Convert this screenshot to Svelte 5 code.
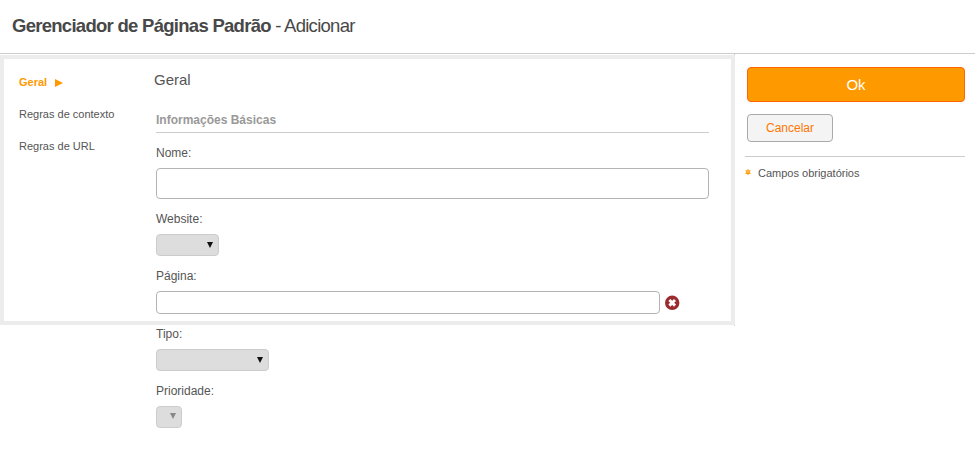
<script>
  const menu = [
    { label: 'Geral', active: true },
    { label: 'Regras de contexto' },
    { label: 'Regras de URL' }
  ];
</script>

<div class="page">
  <header class="head">
    <h1><strong>Gerenciador de Páginas Padrão</strong> - Adicionar</h1>
  </header>
  <div class="body">
    <div class="main">
      <div class="panel">
        <nav class="menu">
          {#each menu as item}
            <a href="#x" class:active={item.active}>{item.label}{#if item.active}<span class="arrow"></span>{/if}</a>
          {/each}
        </nav>
        <div class="content">
          <h2>Geral</h2>
          <form class="form">
            <h3>Informações Básicas</h3>
            <label class="lbl" for="nome">Nome:</label>
            <input id="nome" class="text big" type="text" />
            <label class="lbl" for="web">Website:</label>
            <span class="selwrap"><select id="web" class="sel w63"><option></option></select></span>
            <label class="lbl" for="pag">Página:</label>
            <div class="row">
              <input id="pag" class="text small" type="text" />
              <svg class="x" width="15" height="15" viewBox="0 0 15 15" aria-hidden="true">
                <circle cx="7.2" cy="7.8" r="7.2" fill="#9c2b2e" />
                <path d="M4.4 5l5.6 5.6M10 5l-5.6 5.6" stroke="#fff" stroke-width="2.9" />
              </svg>
            </div>
            <label class="lbl" for="tipo">Tipo:</label>
            <span class="selwrap"><select id="tipo" class="sel w113"><option></option></select></span>
            <label class="lbl" for="pri">Prioridade:</label>
            <span class="selwrap off"><select id="pri" class="sel w26" disabled><option></option></select></span>
          </form>
        </div>
      </div>
    </div>
    <aside class="side">
      <button class="ok" type="button">Ok</button>
      <button class="cancel" type="button">Cancelar</button>
      <div class="req">
        <svg class="star" width="6" height="6" viewBox="0 0 6 6" aria-hidden="true">
          <path d="M3 0.3v5.4M0.6 1.5l4.8 3M5.4 1.5l-4.8 3" stroke="#f90" stroke-width="1.3" />
          <rect x="2.2" y="2.4" width="1.6" height="1.2" fill="#ffd27a" />
        </svg>
        <span>Campos obrigatórios</span>
      </div>
    </aside>
  </div>
</div>

<style>
  :global(body) {
    margin: 0;
    background: #fff;
    font-family: "Liberation Sans", Arial, sans-serif;
    color: #555;
    overflow: hidden;
  }
  .page {
    width: 975px;
    height: 463px;
    overflow: hidden;
  }
  .head {
    height: 52px;
    padding-bottom: 1px;
    border-bottom: 1px solid #ccc;
    box-sizing: content-box;
    display: flex;
    align-items: center;
    padding-left: 12px;
  }
  h1 {
    margin: 0;
    font-size: 18.5px;
    font-weight: 400;
    letter-spacing: -0.72px;
    color: #484848;
  }
  h1 strong { font-weight: 700; }
  .body { display: flex; align-items: flex-start; }
  .main {
    width: 734px;
    height: 271px;
    border-right: 1px solid #ccc;
    flex: none;
    padding-top: 1px;
    box-sizing: content-box;
  }
  .panel {
    width: 727px;
    height: 262px;
    border: 4px solid #ececec;
    background: #fff;
    display: flex;
  }
  .menu {
    width: 150px;
    flex: none;
    display: flex;
    flex-direction: column;
    padding: 17px 0 0 15px;
    box-sizing: border-box;
    gap: 19px;
  }
  .menu a {
    font-size: 11px;
    line-height: 13px;
    color: #555;
    text-decoration: none;
    display: flex;
    align-items: center;
  }
  .menu a.active { color: #f90; font-weight: 700; }
  .arrow {
    width: 0;
    height: 0;
    margin-left: 8px;
    border-left: 8px solid #f90;
    border-top: 4px solid transparent;
    border-bottom: 4px solid transparent;
  }
  .content { flex: 1; min-width: 0; }
  h2 {
    margin: 12px 0 0;
    font-size: 15px;
    line-height: 18px;
    font-weight: 400;
    color: #555;
  }
  .form {
    margin: 0 0 0 2px;
    width: 553px;
    display: flex;
    flex-direction: column;
    align-items: flex-start;
  }
  h3 {
    margin: 16px 0 0;
    padding-top: 3px;
    width: 100%;
    height: 28px;
    line-height: 25px;
    font-size: 12px;
    font-weight: 700;
    color: #999;
    border-bottom: 1px solid #ccc;
    box-sizing: border-box;
  }
  .lbl {
    font-size: 12px;
    line-height: 14px;
    color: #555;
    margin-top: 13px;
    margin-bottom: 8px;
  }
  .text {
    border: 1px solid #b4b4b4;
    border-radius: 4px;
    background: #fff;
    padding: 0 6px;
    box-sizing: border-box;
    display: block;
  }
  .big { width: 553px; height: 31px; }
  .small { width: 504px; height: 23px; }
  .row { display: flex; align-items: center; gap: 5px; }
  .selwrap { position: relative; display: block; }
  .selwrap::after {
    content: "";
    position: absolute;
    top: 8px;
    right: 6px;
    width: 0;
    height: 0;
    border-top: 6px solid #111;
    border-left: 3px solid transparent;
    border-right: 3px solid transparent;
    pointer-events: none;
  }
  .selwrap.off::after { top: 7px; border-top-color: #888; }
  .sel {
    appearance: none;
    height: 22px;
    background-color: #ddd;
    border: 1px solid #ccc;
    border-radius: 4px;
    display: block;
    font-size: 12px;
    color: #000;
    padding: 0;
  }
  .sel:disabled { opacity: 1; color: #777; }
  .w63 { width: 63px; }
  .w113 { width: 113px; }
  .w26 { width: 26px; }
  .side {
    flex: 1;
    padding: 13px 10px 0 12px;
    display: flex;
    flex-direction: column;
    align-items: flex-start;
  }
  button { font-family: inherit; cursor: pointer; }
  .ok {
    width: 218px;
    height: 35px;
    background: #f90;
    border: 1px solid #f60;
    border-radius: 4px;
    color: #fff;
    font-size: 15px;
    padding: 0;
  }
  .cancel {
    margin-top: 12px;
    width: 86px;
    height: 28px;
    background: #f4f4f4;
    border: 1px solid #aaa;
    border-radius: 4px;
    color: #f70;
    font-size: 12px;
    padding: 0;
  }
  .req {
    margin: 14px 0 0 -2px;
    align-self: stretch;
    border-top: 1px solid #ccc;
    padding-top: 10px;
    font-size: 11px;
    line-height: 13px;
    color: #555;
    display: flex;
    align-items: flex-start;
  }
  .star {
    flex: none;
    margin: 2px 7px 0 0;
  }
</style>
